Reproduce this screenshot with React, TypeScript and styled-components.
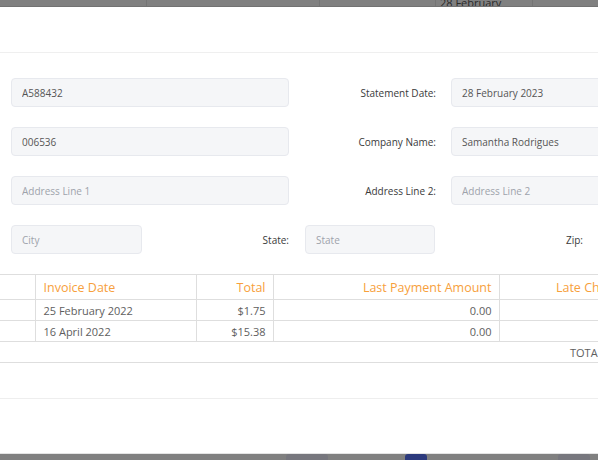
import React from "react";
import styled, { createGlobalStyle } from "styled-components";

const Global = createGlobalStyle`
  html, body { margin: 0; padding: 0; }
  body {
    background: #808080;
    width: 598px;
    height: 460px;
    overflow: hidden;
    font-family: "Open Sans", "Noto Sans", sans-serif;
  }
  * { box-sizing: border-box; }
`;

const Screen = styled.div`
  width: 598px;
  height: 460px;
  display: flex;
  flex-direction: column;
  overflow: hidden;
`;

const BackStrip = styled.div`
  height: 7px;
  display: flex;
  overflow: hidden;
  border-bottom: 1px solid #727272;
`;

const BackCell = styled.div<{ $w: number }>`
  flex: 0 0 ${(p) => p.$w}px;
  border-right: 1px solid #747474;
  overflow: hidden;
  font-size: 11px;
  line-height: 11px;
  color: #2a2a2a;
  padding-left: 4px;
  margin-top: -3px;
  white-space: nowrap;
`;

const Modal = styled.div`
  flex: 0 0 446px;
  background: #ffffff;
  display: flex;
  flex-direction: column;
  overflow: hidden;
`;

const ModalHeader = styled.div`
  height: 46px;
  border-bottom: 1px solid #efefef;
  flex-shrink: 0;
`;

const ModalBody = styled.div`
  padding-top: 25px;
  height: 345px;
  flex-shrink: 0;
`;

const ModalFooter = styled.div`
  border-top: 1px solid #eeeeee;
  flex: 1;
`;

const FormRow = styled.div<{ $cols: string }>`
  display: grid;
  grid-template-columns: ${(p) => p.$cols};
  align-items: center;
  padding-left: 11px;
  margin-bottom: 20px;
`;

const Label = styled.label<{ $pr: number }>`
  text-align: right;
  padding-right: ${(p) => p.$pr}px;
  font-size: 10px;
  color: #3a3a3a;
  white-space: nowrap;
`;

const Input = styled.input`
  height: 29px;
  width: 100%;
  border: 1px solid #e7e9ee;
  border-radius: 4px;
  background: #f5f6f8;
  padding: 0 10px;
  font-family: "Open Sans", "Noto Sans", sans-serif;
  font-size: 10px;
  color: #555;
  outline: none;
  &::placeholder { color: #9ea3ab; }
`;

const TableWrap = styled.div`
  margin-top: 1px;
`;

const Table = styled.table`
  border-collapse: collapse;
  table-layout: fixed;
  width: 785px;
  border-top: 1px solid #dedede;
`;

const Th = styled.th<{ $align?: string }>`
  height: 25px;
  padding: 0 7px 0 8px;
  font-weight: 400;
  font-size: 12.5px;
  color: #f7a03c;
  text-align: ${(p) => p.$align || "left"};
  border-right: 1px solid #dedede;
  border-bottom: 1px solid #dedede;
  white-space: nowrap;
  overflow: hidden;
`;

const Td = styled.td<{ $align?: string }>`
  height: 21px;
  padding: 0 7px 0 8px;
  font-size: 11px;
  color: #5e5e5e;
  text-align: ${(p) => p.$align || "left"};
  border-right: 1px solid #dedede;
  border-bottom: 1px solid #dedede;
  white-space: nowrap;
  overflow: hidden;
`;

const TotalTd = styled.td<{ $pl?: number }>`
  height: 21px;
  padding: 0 0 0 ${(p) => p.$pl || 0}px;
  font-size: 11px;
  color: #5e5e5e;
  border-bottom: 1px solid #dedede;
  white-space: nowrap;
`;

const BottomStrip = styled.div`
  flex: 1;
  display: flex;
  align-items: flex-end;
  border-top: 1px solid #e4e4e4;
`;

const Spacer = styled.div<{ $w: number }>`
  flex: 0 0 ${(p) => p.$w}px;
`;

const GhostButton = styled.div<{ $w: number; $c: string }>`
  flex: 0 0 ${(p) => p.$w}px;
  height: 6px;
  background: ${(p) => p.$c};
  border-radius: 3px 3px 0 0;
`;

const rows = [
  { date: "25 February 2022", total: "$1.75", last: "0.00" },
  { date: "16 April 2022", total: "$15.38", last: "0.00" },
];

export default function App() {
  return (
    <>
      <Global />
      <Screen>
        <BackStrip>
          <BackCell $w={147} />
          <BackCell $w={173} />
          <BackCell $w={116} />
          <BackCell $w={97}>28 February</BackCell>
          <BackCell $w={80} />
        </BackStrip>
        <Modal>
          <ModalHeader />
          <ModalBody>
            <FormRow $cols="278px 162px 278px">
              <Input readOnly value="A588432" />
              <Label $pr={15}>Statement Date:</Label>
              <Input readOnly value="28 February 2023" />
            </FormRow>
            <FormRow $cols="278px 162px 278px">
              <Input readOnly value="006536" />
              <Label $pr={15}>Company Name:</Label>
              <Input readOnly value="Samantha Rodrigues" />
            </FormRow>
            <FormRow $cols="278px 162px 278px">
              <Input placeholder="Address Line 1" />
              <Label $pr={15}>Address Line 2:</Label>
              <Input placeholder="Address Line 2" />
            </FormRow>
            <FormRow $cols="131px 163px 130px 163px 130px">
              <Input placeholder="City" />
              <Label $pr={16}>State:</Label>
              <Input placeholder="State" />
              <Label $pr={15}>Zip:</Label>
              <Input placeholder="Zip" />
            </FormRow>
            <TableWrap>
              <Table>
                <colgroup>
                  <col style={{ width: 35 }} />
                  <col style={{ width: 161 }} />
                  <col style={{ width: 77 }} />
                  <col style={{ width: 226 }} />
                  <col style={{ width: 140 }} />
                  <col style={{ width: 146 }} />
                </colgroup>
                <thead>
                  <tr>
                    <Th />
                    <Th>Invoice Date</Th>
                    <Th $align="right">Total</Th>
                    <Th $align="right">Last Payment Amount</Th>
                    <Th $align="right">Late Charges</Th>
                    <Th $align="right">Balance</Th>
                  </tr>
                </thead>
                <tbody>
                  {rows.map((r) => (
                    <tr key={r.date}>
                      <Td />
                      <Td>{r.date}</Td>
                      <Td $align="right">{r.total}</Td>
                      <Td $align="right">{r.last}</Td>
                      <Td $align="right">0.00</Td>
                      <Td $align="right" />
                    </tr>
                  ))}
                  <tr>
                    <TotalTd colSpan={4} />
                    <TotalTd $pl={71}>TOTAL</TotalTd>
                    <TotalTd />
                  </tr>
                </tbody>
              </Table>
            </TableWrap>
          </ModalBody>
          <ModalFooter />
        </Modal>
        <BottomStrip>
          <Spacer $w={286} />
          <GhostButton $w={42} $c="#77777e" />
          <Spacer $w={77} />
          <GhostButton $w={22} $c="#2c3a7d" />
          <Spacer $w={131} />
          <GhostButton $w={32} $c="#77777e" />
        </BottomStrip>
      </Screen>
    </>
  );
}
